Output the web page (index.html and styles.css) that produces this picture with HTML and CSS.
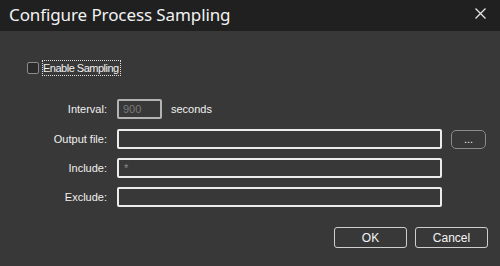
FILE: index.html
```html
<!DOCTYPE html>
<html>
<head>
	<title>Configure Process Sampling</title>
	<link rel="stylesheet" href="styles.css">
</head>
<body>

	<div id="dialog">
		<div class="titlebar">
			<span class="title">Configure Process Sampling</span>
			<button class="close" title="Close">
				<svg width="11" height="11" viewBox="0 0 11 11"><path d="M0.5 0.5 L10.5 10.5 M10.5 0.5 L0.5 10.5" stroke="#e6e6e6" stroke-width="1.3"/></svg>
			</button>
		</div>

		<div class="content">
			<label class="enable">
				<span class="box"></span>
				<span class="focus">Enable Sampling</span>
			</label>

			<div class="form">
				<span class="label">Interval:</span>
				<div class="interval">
					<input class="small" type="text" value="900" disabled>
					<span>seconds</span>
				</div>

				<span class="label">Output file:</span>
				<input type="text">
				<button class="browse">...</button>

				<span class="label">Include:</span>
				<input type="text" placeholder="*" class="wide">

				<span class="label">Exclude:</span>
				<input type="text" class="wide">
			</div>

			<div class="buttons">
				<button class="btn">OK</button>
				<button class="btn">Cancel</button>
			</div>
		</div>
	</div>

</body>
</html>
```

FILE: styles.css
```css
body{
	margin: 0;
	font-family: "Liberation Sans", Arial, sans-serif;
	font-size: 11px;
	color: #f0f0f0;
	background: #383838;
}

#dialog{
	width: 500px;
	height: 266px;
	background: #383838;
}

.titlebar{
	height: 31px;
	background: #202020;
	display: flex;
	align-items: center;
	justify-content: space-between;
	padding: 0 14px 0 9px;
}

.title{
	font-family: "Noto Sans", sans-serif;
	font-size: 17px;
	letter-spacing: -0.1px;
	color: #f2f2f2;
	margin-top: -3px;
}

.close{
	background: none;
	border: none;
	padding: 0;
	display: flex;
	margin-top: -5px;
}

.content{
	padding: 29px 12px 0 0;
}

.enable{
	display: flex;
	align-items: center;
	margin-left: 27px;
	height: 16px;
}

.box{
	width: 10px;
	height: 10px;
	border: 1px solid #8c8c8c;
	border-radius: 2px;
	background: #2b2b2b;
	margin-top: -1px;
}

.focus{
	margin-left: 3px;
	padding: 1px 1px 1px 0;
	border: 1px dotted #e0e0e0;
	letter-spacing: -0.5px;
}

.form{
	margin-top: 23px;
	display: grid;
	grid-template-columns: 107px 325px 34px;
	grid-template-rows: 21px 20px 20px 20px;
	column-gap: 10px;
	row-gap: 9px;
}

.label{
	text-align: right;
	line-height: 20px;
	grid-column: 1;
}

.interval{
	display: flex;
	align-items: flex-start;
	gap: 9px;
	line-height: 20px;
	grid-column: 2 / 4;
}

input{
	box-sizing: border-box;
	height: 20px;
	width: 325px;
	background: #383838;
	border: 2px solid #ececec;
	border-radius: 2px;
	color: #f0f0f0;
	font-family: inherit;
	font-size: 11px;
	padding: 0 5px;
	outline: none;
}

input::placeholder{
	color: #8a8a8a;
}

.wide{
	grid-column: 2;
}

.small{
	width: 45px;
	border-color: #b4b4b4;
	color: #7a7a7a;
	padding-left: 4px;
}

.browse{
	height: 19px;
	margin-top: 1px;
	margin-left: -1px;
	background: #383838;
	border: 1.5px solid #8a8a8a;
	border-radius: 5px;
	color: #f0f0f0;
	font-family: inherit;
	font-size: 11px;
	padding: 0 0 1px;
	line-height: 12px;
}

.buttons{
	display: flex;
	justify-content: flex-end;
	gap: 8px;
	margin-top: 20px;
}

.btn{
	width: 73px;
	height: 21px;
	background: #383838;
	border: 1.5px solid #cfcfcf;
	border-radius: 3px;
	color: #f4f4f4;
	font-family: inherit;
	font-size: 12px;
	padding: 0;
}
```
